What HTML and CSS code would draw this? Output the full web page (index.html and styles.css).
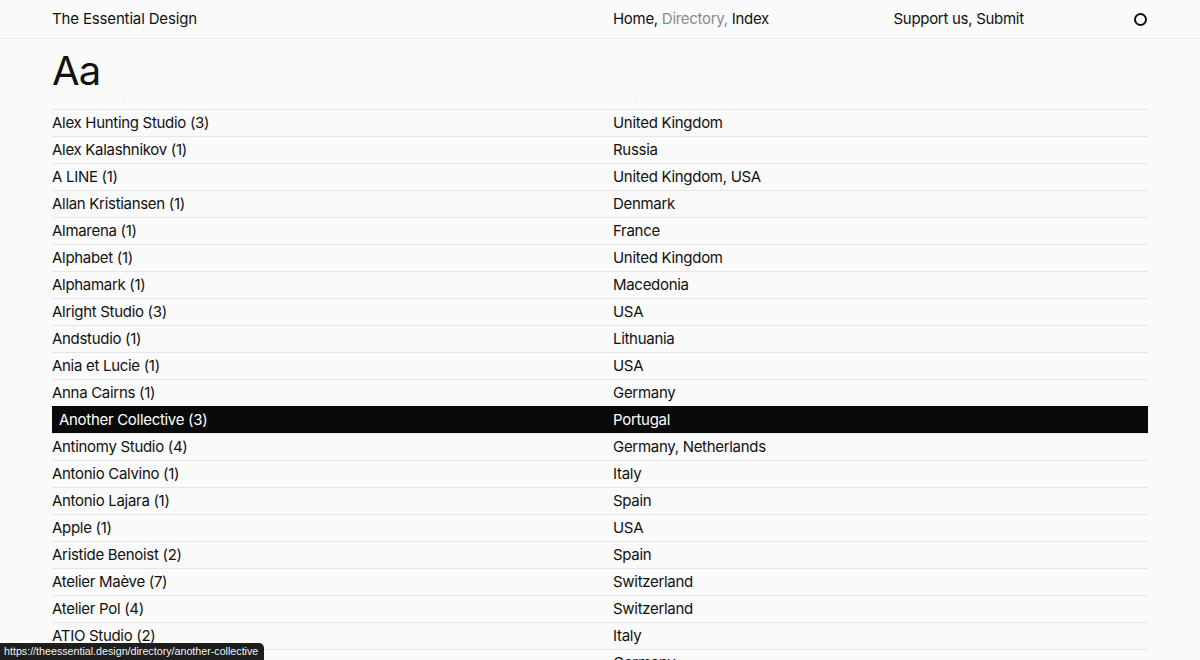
FILE: index.html
```html
<!DOCTYPE html>
<html lang="en">
<head>
    <meta charset="UTF-8">
    <meta name="viewport" content="width=device-width, initial-scale=1.0">
    <title>Directory — The Essential Design</title>
    <link rel="stylesheet" href="styles.css">
</head>
<body>
    <header class="site-header">
        <a class="brand" href="#">The Essential Design</a>
        <span class="spacer"></span>
        <nav class="nav">
            <a href="#">Home,</a>
            <a href="#" class="current">Directory,</a>
            <a href="#">Index</a>
        </nav>
        <div class="nav-right">
            <nav class="nav">
                <a href="#">Support us,</a>
                <a href="#">Submit</a>
            </nav>
            <span class="dot"></span>
        </div>
    </header>

    <main class="directory">
        <h1 class="letter">Aa</h1>

        <div class="peek">
            <div class="row">
                <span class="name">Alex Fairley Studio (1)</span>
                <span class="country">Italy</span>
            </div>
        </div>

        <ul class="rows">
            <li class="row"><span class="name">Alex Hunting Studio (3)</span><span class="country">United Kingdom</span></li>
            <li class="row"><span class="name">Alex Kalashnikov (1)</span><span class="country">Russia</span></li>
            <li class="row"><span class="name">A LINE (1)</span><span class="country">United Kingdom, USA</span></li>
            <li class="row"><span class="name">Allan Kristiansen (1)</span><span class="country">Denmark</span></li>
            <li class="row"><span class="name">Almarena (1)</span><span class="country">France</span></li>
            <li class="row"><span class="name">Alphabet (1)</span><span class="country">United Kingdom</span></li>
            <li class="row"><span class="name">Alphamark (1)</span><span class="country">Macedonia</span></li>
            <li class="row"><span class="name">Alright Studio (3)</span><span class="country">USA</span></li>
            <li class="row"><span class="name">Andstudio (1)</span><span class="country">Lithuania</span></li>
            <li class="row"><span class="name">Ania et Lucie (1)</span><span class="country">USA</span></li>
            <li class="row"><span class="name">Anna Cairns (1)</span><span class="country">Germany</span></li>
            <li class="row active"><span class="name">Another Collective (3)</span><span class="country">Portugal</span></li>
            <li class="row"><span class="name">Antinomy Studio (4)</span><span class="country">Germany, Netherlands</span></li>
            <li class="row"><span class="name">Antonio Calvino (1)</span><span class="country">Italy</span></li>
            <li class="row"><span class="name">Antonio Lajara (1)</span><span class="country">Spain</span></li>
            <li class="row"><span class="name">Apple (1)</span><span class="country">USA</span></li>
            <li class="row"><span class="name">Aristide Benoist (2)</span><span class="country">Spain</span></li>
            <li class="row"><span class="name">Atelier Maève (7)</span><span class="country">Switzerland</span></li>
            <li class="row"><span class="name">Atelier Pol (4)</span><span class="country">Switzerland</span></li>
            <li class="row"><span class="name">ATIO Studio (2)</span><span class="country">Italy</span></li>
            <li class="row"><span class="name">Atlas (1)</span><span class="country">Germany</span></li>
        </ul>
    </main>

    <div class="status">https://theessential.design/directory/another-collective</div>
</body>
</html>
```

FILE: styles.css
```css
html, body {
    height: 100%;
    overflow: hidden;
}
body {
    margin: 0;
    background: #fafafa;
    color: #111;
    font-family: 'Inter', 'Helvetica', sans-serif;
    font-size: 15px;
    line-height: 26px;
    letter-spacing: -0.3px;
}
a {
    color: inherit;
    text-decoration: none;
}
ul {
    list-style: none;
    margin: 0;
    padding: 0;
}

/* header */
.site-header {
    display: grid;
    grid-template-columns: repeat(4, 1fr);
    column-gap: 26px;
    align-items: center;
    height: 38px;
    padding: 0 52px;
    border-bottom: 1px solid #ebebeb;
}
.brand {
    letter-spacing: -0.15px;
}
.nav {
    display: flex;
    gap: 4px;
}
.nav .current {
    color: #8a8a8a;
}
.nav-right {
    display: flex;
    justify-content: space-between;
    align-items: center;
}
.dot {
    width: 9px;
    height: 9px;
    border: 2px solid #111;
    border-radius: 50%;
    margin-right: 1px;
}

/* directory */
.directory {
    padding: 0 52px;
}
.letter {
    margin: 0;
    height: 62px;
    font-size: 40px;
    font-weight: 400;
    line-height: 64px;
    letter-spacing: -0.8px;
}
.peek {
    height: 7px;
    margin-top: 1px;
    overflow: hidden;
}
.peek .row {
    margin-top: -21px;
    border-top: none;
}
.row {
    display: grid;
    grid-template-columns: repeat(4, 1fr);
    column-gap: 26px;
    height: 26px;
    border-top: 1px solid #e6e6e6;
}
.name {
    grid-column: 1 / 3;
}
.country {
    grid-column: 3 / 5;
}
.row.active {
    background: #0a0a0a;
    color: #fff;
    border-top-color: #0a0a0a;
    box-shadow: 0 1px 0 #4a4a4a;
}
.row.active .name {
    padding-left: 7px;
}

/* browser link preview */
.status {
    position: fixed;
    left: 0;
    bottom: 0;
    height: 17px;
    padding: 0 6px 0 4px;
    background: #1e1e1e;
    color: #f2f2f2;
    font-family: 'Liberation Sans', 'Helvetica', sans-serif;
    font-size: 10.7px;
    line-height: 17px;
    letter-spacing: 0;
    border-top-right-radius: 5px;
}
```
